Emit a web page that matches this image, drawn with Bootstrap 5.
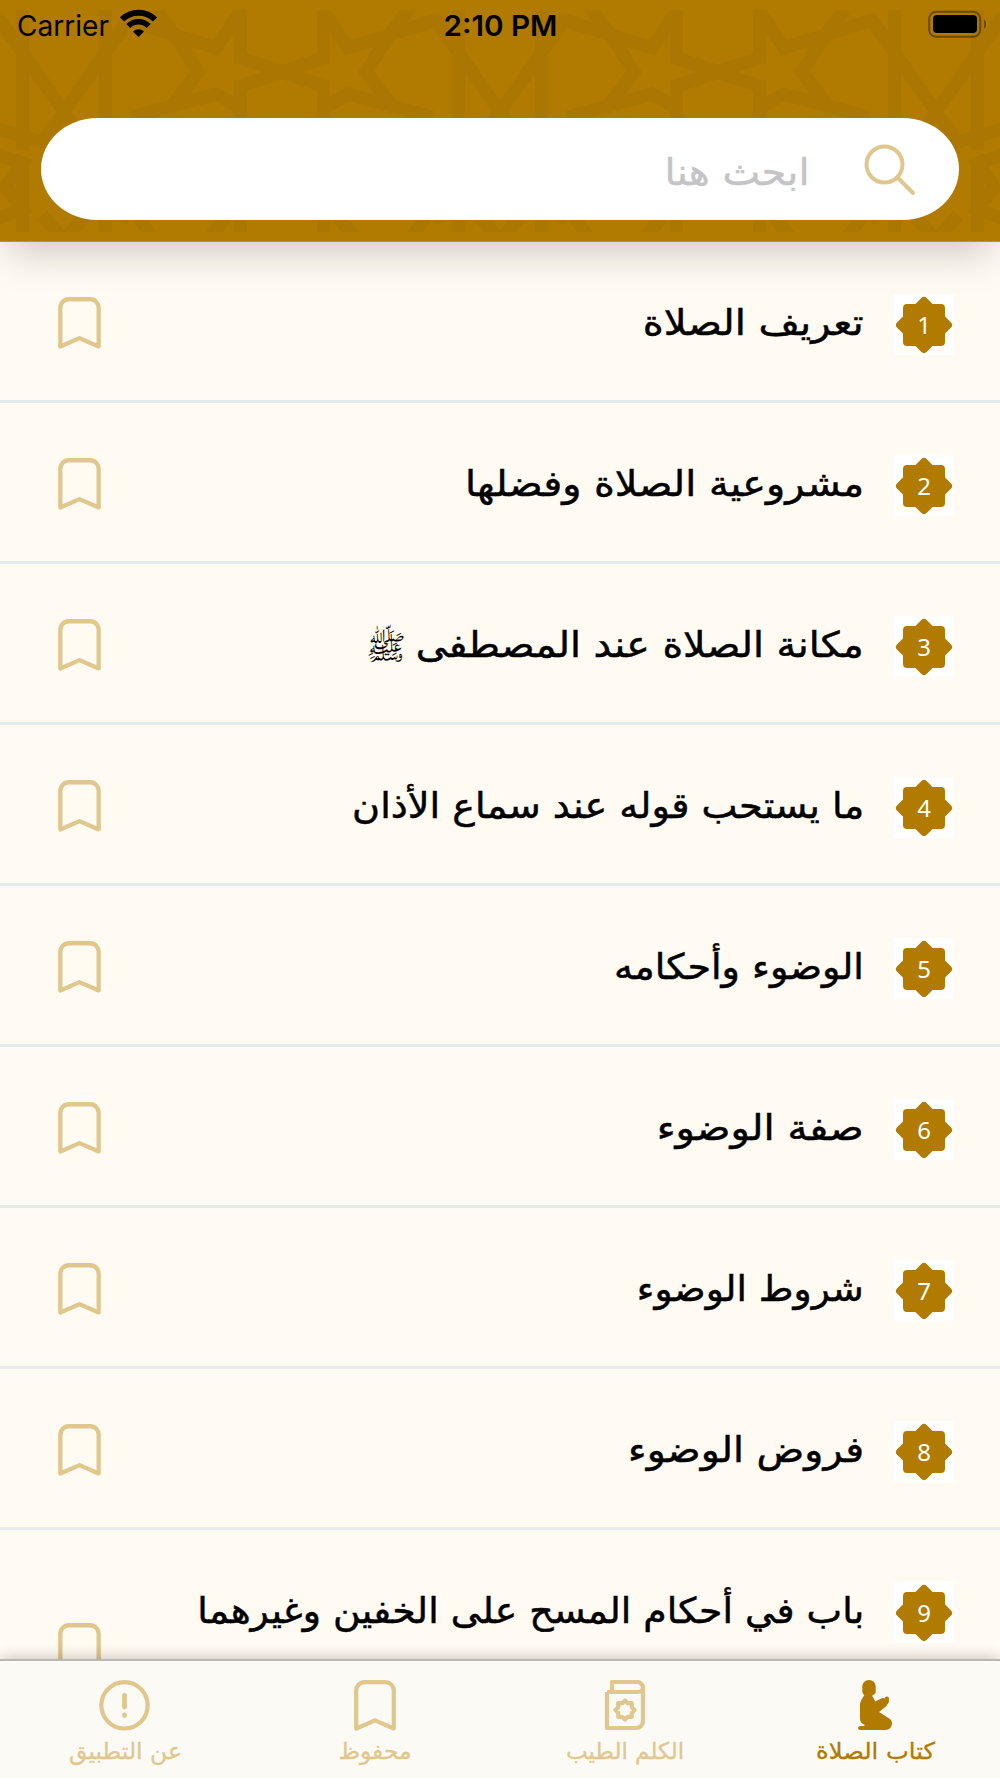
<!DOCTYPE html>
<html lang="ar" dir="rtl">
<head>
<meta charset="utf-8">
<meta name="viewport" content="width=device-width, initial-scale=1">
<title>كتاب الصلاة</title>
<link href="https://cdn.jsdelivr.net/npm/bootstrap@5.3.0/dist/css/bootstrap.min.css" rel="stylesheet">
<style>
  :root { --gold: #b07b00; --sand: #dfc78d; --cream: #fffbf3; }
  body { background: var(--cream); font-family: "DejaVu Sans", "Liberation Sans", sans-serif; color: #000; }
  .screen { width: 1000px; height: 1778px; }
  .app-header { height: 242px; background: var(--gold); border-bottom: 1px solid #bd9133; box-shadow: 0 16px 40px -8px rgba(0,0,0,.22); z-index: 2; }
  .pattern { inset: 0; z-index: -1; }
  .status-bar { height: 46px; padding: 0 14px 0 17px; font-family: Inter, "Liberation Sans", sans-serif; font-size: 29px; line-height: 51px; }
  .status-side { width: 300px; }
  .status-side .fit { transform-origin: 0 50%; }
  .battery { margin-top: 10px; }
  .search-pill { height: 102px; margin: 72px 41px 0; padding: 0 43px 0 0; border-radius: 56px / 51px; }
  .search-input { font-size: 37px; line-height: 60px; color: #c4c4c6; margin: 7px 52px 0 0; -webkit-text-stroke: .4px; }
  .chapter { height: 161px; padding: 52px 46px 0 58px; background: var(--cream); border: 0; border-bottom: 3px solid #e5eaea !important; border-radius: 0 !important; }
  .chapter.tall { height: 237px; }
  .star-box { width: 60px; height: 61px; background: #fff; font: 24px/60px "Noto Sans", sans-serif; color: #fff; }
  .star-box svg { inset: 0; }
  .star-box span { top: 1px; }
  .chapter-title { font-size: 35.5px; line-height: 60px; margin: -1px 30px 0 0; color: #000; -webkit-text-stroke: .5px; }
  .salawat { font-size: 33px; line-height: 1; margin-right: 10px; position: relative; top: 2px; -webkit-text-stroke: 0; }
  .fit { display: inline-block; white-space: nowrap; transform-origin: 100% 50%; }
  .save { width: 43px; height: 52px; margin-top: 3px; color: var(--sand); }
  .tall .save { margin-top: 41px; }
  .tab-bar { height: 119px; background: #fcfaf5; border-top: 2px solid #b9b7b2; box-shadow: 0 -3px 14px -2px rgba(0,0,0,.24); z-index: 3; }
  .tab { width: 250px; padding-top: 19px; color: var(--sand); text-decoration: none; font-size: 23px; line-height: 40px; -webkit-text-stroke: .3px; }
  .tab .tab-icon { height: 51px; }
  .tab.on { color: var(--gold); }
  .tab .fit { transform-origin: 50% 50%; }
</style>
<script src="https://cdn.jsdelivr.net/npm/bootstrap@5.3.0/dist/js/bootstrap.bundle.min.js"></script>
</head>
<body>
<svg width="0" height="0" class="position-absolute" aria-hidden="true">
  <symbol id="i-save" viewBox="0 0 42 51"><path d="M2.2 48.5V10.5a8.3 8.3 0 0 1 8.3-8.3h21a8.3 8.3 0 0 1 8.3 8.3v38L21 40.3Z" fill="none" stroke="currentColor" stroke-width="4.2" stroke-linejoin="round"/></symbol>
  <symbol id="i-star" viewBox="0 0 60 61"><g fill="#b07b00" stroke="#b07b00" stroke-width="8" stroke-linejoin="round"><path d="M13 14H47V48H13Z"/><path d="M30 7 54 31 30 55 6 31Z"/></g></symbol>
</svg>
<div class="screen d-flex flex-column overflow-hidden position-relative mx-auto">
  <header class="app-header flex-shrink-0 position-relative">
    <svg class="pattern position-absolute" width="1000" height="241" aria-hidden="true">
      <defs>
        <clipPath id="band"><rect y="10" width="1000" height="222"/></clipPath>
        <g id="half">
          <path d="M41.5 0V58L-1 72L41.5 86V120M41.5 216V250M176.500 0V150M176.500 165V250M39 8L66 48L154 20L218 112M128 8L108 34L84 72L113 110M41.500 120V108L66 94L150 117M218 112L240 142L284 129M284 155L260 163L276 187L260 209L284 219M55 216L75 240M145 215L128 240M240 215L218 240"/>
        </g>
        <g id="unit"><use href="#half"/><use href="#half" transform="scale(-1 1)"/></g>
      </defs>
      <g clip-path="url(#band)"><g fill="none" stroke="#ab7700" stroke-width="13">
        <use href="#unit" x="-154"/><use href="#unit" x="282"/><use href="#unit" x="718"/><use href="#unit" x="1154"/>
      </g></g>
    </svg>
    <div class="status-bar d-flex justify-content-between" dir="ltr">
      <div class="status-side d-flex">
        <span><span class="fit" data-w="92">Carrier</span></span>
        <svg width="40" height="40" viewBox="0 0 40 40" class="ms-2" aria-hidden="true"><g transform="translate(-1.500)"><g fill="none" stroke="#000"><path d="M3.500 19.500a23.300 23.300 0 0 1 33 0" stroke-width="6"/><path d="M9.800 26a14.300 14.300 0 0 1 20.400 0" stroke-width="5.600"/></g><path d="M14.500 31.400a8 8 0 0 1 11 0L20 37Z"/></g></svg>
      </div>
      <div class="fw-semibold text-center"><span class="fit" data-w="114">2:10 PM</span></div>
      <div class="status-side d-flex justify-content-end">
        <svg class="battery" width="60" height="30" viewBox="0 0 60 30" aria-hidden="true"><rect x="3.200" y="1.800" width="51" height="25" rx="7" fill="none" stroke="#6a4a00" stroke-width="2"/><rect x="7" y="5" width="44" height="18" rx="4"/><path d="M58 9.500a6 6 0 0 1 0 9.500Z" fill="#6a4a00"/></svg>
      </div>
    </div>
    <div class="search-pill bg-white d-flex align-items-center">
      <svg width="54" height="54" viewBox="0 0 54 54" fill="none" stroke="#dfc78d" stroke-width="4" stroke-linecap="round" aria-hidden="true"><circle cx="22.500" cy="22.500" r="18"/><path d="M35.500 35.500 51 51"/></svg>
      <div class="search-input"><span class="fit" data-w="145">ابحث هنا</span></div>
    </div>
  </header>
  <main class="list-group list-group-flush p-0 flex-grow-1 overflow-hidden" id="chapters"></main>
  <nav class="tab-bar flex-shrink-0 d-flex position-relative">
    <a class="tab on d-flex flex-column align-items-center" href="#">
      <svg class="tab-icon" width="50" viewBox="0 0 50 51" fill="currentColor" aria-hidden="true"><path d="M19 0C23 0 25.700 3 25.700 7v4.500c0 2-1.600 3.500-3.700 4.200.8 1 1.500 2 2.500 4.200l.8 1.600 6.400-3.200c1-.5 2-.2 3 .3 0-1.300 1-2 2.200-2 1.400 0 2.300 1.200 2.100 2.600l-.3 3.300c-.2 1.200-1.200 2-2 2.400-.3 1.300-1 2.100-2 2.700L29 32l9.500 6c2.600 1.700 3.500 3 3.500 5.300 0 3.600-2.400 6.700-6.500 6.700H10c-2.500 0-2.700-4 .3-4h4l.3-1.300c-3-1-4.600-3.200-4.600-6V25c0-3.600 2-6.400 4.300-9.700-1.300-1.300-2-2.600-2-4.300V7C12.300 3 15 0 19 0Z"/></svg>
      <span class="fit" data-w="119">كتاب الصلاة</span>
    </a>
    <a class="tab d-flex flex-column align-items-center" href="#">
      <svg class="tab-icon" width="50" viewBox="0 0 50 51" fill="none" stroke="currentColor" stroke-width="4.200" stroke-linejoin="round" aria-hidden="true"><path d="M7 12V48H36a7 7 0 0 0 7-7V8a6 6 0 0 0-6-6H12V12M7 12H38a5 5 0 0 0 5-5"/><path d="M25 20.500l2.800 2.700h4v4L34.500 30l-2.700 2.800v4h-4L25 39.500l-2.800-2.700h-4v-4L15.500 30l2.700-2.800v-4h4Z"/></svg>
      <span class="fit" data-w="118">الكلم الطيب</span>
    </a>
    <a class="tab d-flex flex-column align-items-center" href="#">
      <svg class="tab-icon" width="42" aria-hidden="true"><use href="#i-save"/></svg>
      <span class="fit" data-w="73">محفوظ</span>
    </a>
    <a class="tab d-flex flex-column align-items-center" href="#">
      <svg class="tab-icon" width="52" viewBox="0 0 52 51" fill="none" stroke="currentColor" stroke-linecap="round" aria-hidden="true"><circle cx="25.500" cy="25.300" r="23.200" stroke-width="4.200"/><path d="M25.500 15.500V27M25.500 35v.500" stroke-width="4.800"/></svg>
      <span class="fit" data-w="113">عن التطبيق</span>
    </a>
  </nav>
</div>
<script>
  const chapters = [
    ['تعريف الصلاة', 221], ['مشروعية الصلاة وفضلها', 399], ['مكانة الصلاة عند المصطفى', 448],
    ['ما يستحب قوله عند سماع الأذان', 512], ['الوضوء وأحكامه', 250], ['صفة الوضوء', 207],
    ['شروط الوضوء', 227], ['فروض الوضوء', 236], ['باب في أحكام المسح على الخفين وغيرهما', 667]
  ];
  document.getElementById('chapters').innerHTML = chapters.map(([title, w], i) => `
    <div class="list-group-item chapter d-flex align-items-start flex-shrink-0 ${i === 8 ? 'tall' : ''}">
      <div class="star-box position-relative text-center flex-shrink-0">
        <svg class="position-absolute" width="60" height="61"><use href="#i-star"/></svg>
        <span class="position-relative">${i + 1}</span>
      </div>
      <div class="chapter-title d-flex align-items-center flex-grow-1"><span class="fit" data-w="${w}" data-box>${title}</span>${i === 2 ? '<span class="salawat">ﷺ</span>' : ''}</div>
      <svg class="save flex-shrink-0"><use href="#i-save"/></svg>
    </div>`).join('');
  // Scale each label to its design width; list titles also reserve that width.
  document.querySelectorAll('.fit').forEach(el => {
    const natural = el.getBoundingClientRect().width, w = +el.dataset.w;
    el.style.transform = `scaleX(${w / natural})`;
    if ('box' in el.dataset) el.style.marginLeft = (w - natural) + 'px';
  });
</script>
</body>
</html>
